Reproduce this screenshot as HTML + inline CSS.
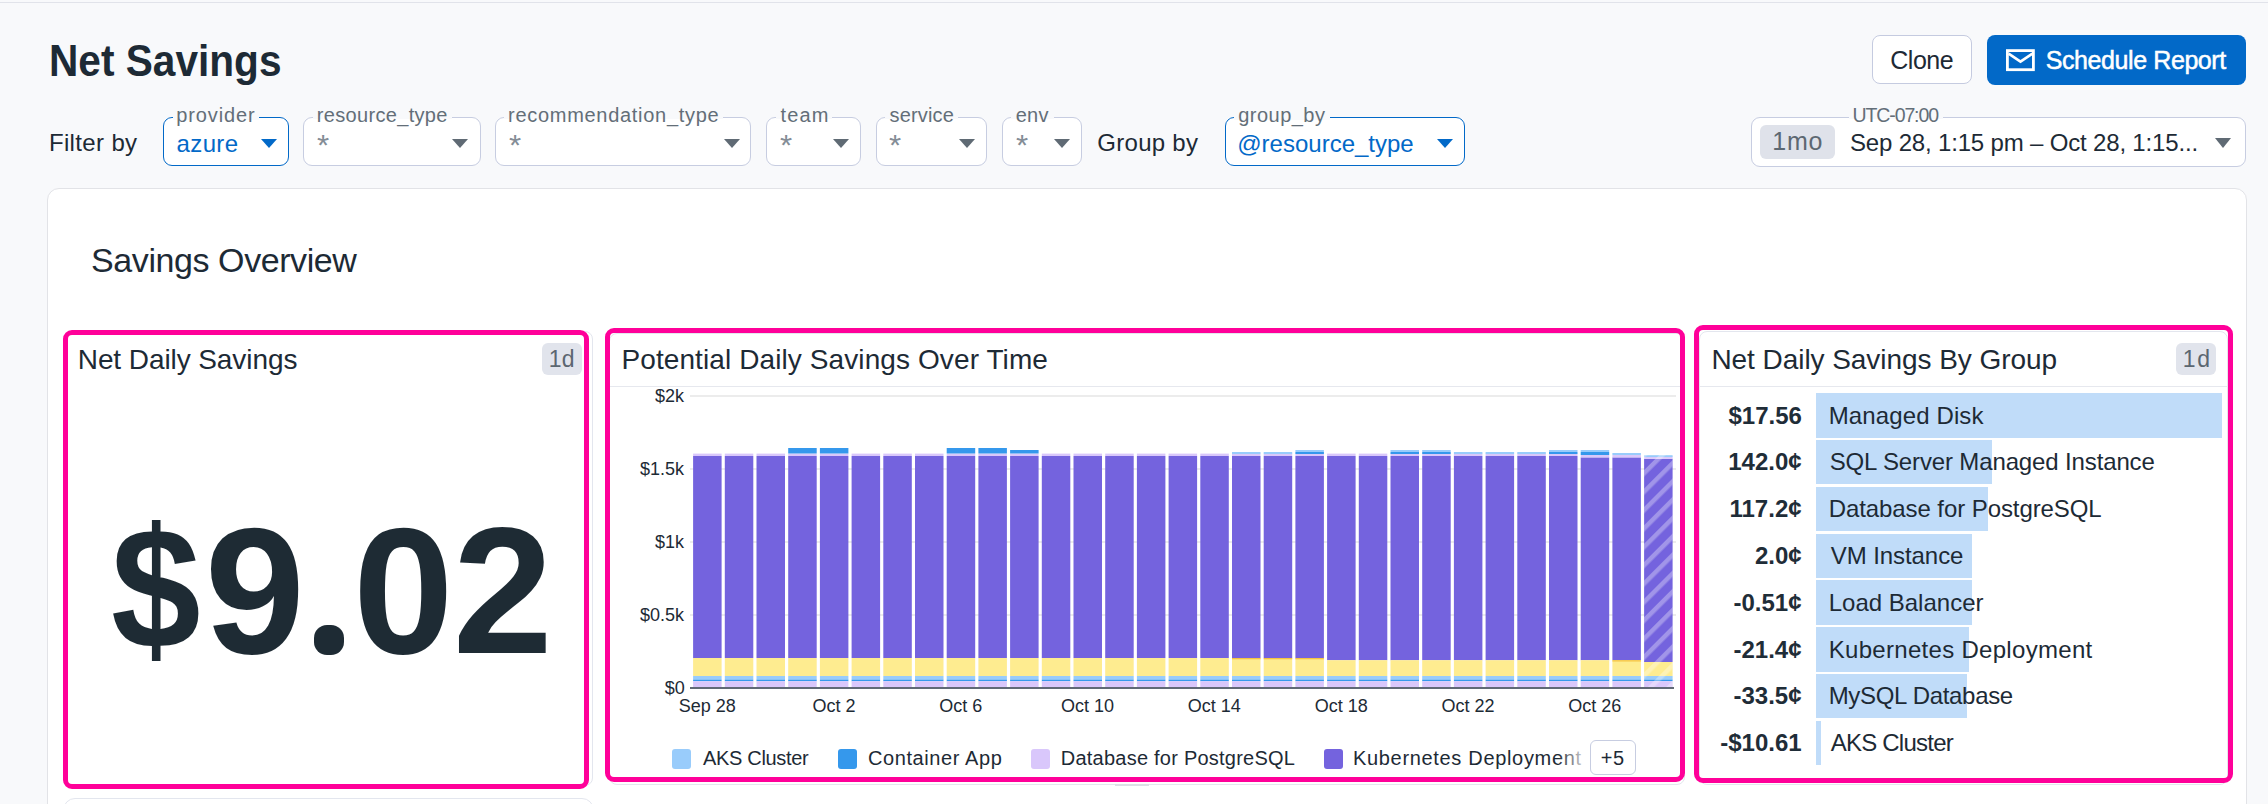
<!DOCTYPE html>
<html><head><meta charset="utf-8"><title>Net Savings</title>
<style>
html,body{margin:0;padding:0;}
body{width:2268px;height:804px;overflow:hidden;position:relative;background:#f8f9fb;font-family:'Liberation Sans', sans-serif;}
.t{position:absolute;white-space:nowrap;line-height:1;font-family:'Liberation Sans', sans-serif;}
.b{position:absolute;}
</style></head><body>
<div class="b" style="left:0px;top:2px;width:2268px;height:1px;background:#e1e3ea;"></div>
<div class="t" style="left:49.03px;top:39.00px;font-size:44px;color:#1d2a35;font-weight:700;transform:scale(0.9230,1.0000);transform-origin:0 37px;">Net Savings</div>
<div class="b" style="left:1872px;top:35px;width:100px;height:49px;background:#fff;border:1px solid #c5cbe0;border-radius:8px;box-sizing:border-box;"></div>
<div class="t" style="left:1890.25px;top:48.00px;font-size:25px;color:#1d2a35;letter-spacing:-0.475px;">Clone</div>
<div class="b" style="left:1987px;top:35px;width:259px;height:50px;background:#0269c8;border-radius:8px;"></div>
<svg class="b" style="left:2004px;top:47px" width="32" height="26" viewBox="0 0 32 26"><rect x="3.4" y="3.6" width="26" height="19.1" fill="none" stroke="#fff" stroke-width="2.8"/><path d="M4.6 6.6 L16.5 14.6 L28.4 6.6" fill="none" stroke="#fff" stroke-width="2.6"/></svg>
<div class="t" style="left:2045.75px;top:48.00px;font-size:25px;color:#ffffff;letter-spacing:-0.411px;-webkit-text-stroke:0.5px #fff;">Schedule Report</div>
<div class="t" style="left:48.90px;top:130.80px;font-size:24px;color:#1d2a35;letter-spacing:0.356px;">Filter by</div>
<div class="b" style="left:163px;top:117px;width:126px;height:49px;background:#fff;border:1.6px solid #0269c8;border-radius:9px;box-sizing:border-box;"></div>
<div class="b" style="left:172.6px;top:112px;width:86.80000000000001px;height:8px;background:#f8f9fb;"></div>
<div class="b" style="left:172.6px;top:119.5px;width:86.80000000000001px;height:8px;background:#fff;"></div>
<div class="t" style="left:176.35px;top:104.80px;font-size:20px;color:#636e78;letter-spacing:0.864px;">provider</div>
<div class="t" style="left:176.60px;top:131.60px;font-size:24px;color:#0269c8;letter-spacing:0.350px;">azure</div>
<svg class="b" style="left:261px;top:139px" width="16" height="9" viewBox="0 0 16 9"><path d="M0 0 L16 0 L8 9 Z" fill="#0269c8"/></svg>
<div class="b" style="left:303px;top:117px;width:178px;height:49px;background:#fff;border:1.5px solid #c7cde1;border-radius:9px;box-sizing:border-box;"></div>
<div class="b" style="left:313px;top:112px;width:138.7px;height:8px;background:#f8f9fb;"></div>
<div class="b" style="left:313px;top:118.5px;width:138.7px;height:8px;background:#fff;"></div>
<div class="t" style="left:316.75px;top:104.80px;font-size:20px;color:#636e78;letter-spacing:0.329px;">resource_type</div>
<div class="t" style="left:317.48px;top:129.65px;font-size:30px;color:#848d96;transform:scale(1.0419,1.0000);transform-origin:0 25px;">*</div>
<svg class="b" style="left:452px;top:139px" width="16" height="9" viewBox="0 0 16 9"><path d="M0 0 L16 0 L8 9 Z" fill="#5f6a74"/></svg>
<div class="b" style="left:495px;top:117px;width:256px;height:49px;background:#fff;border:1.5px solid #c7cde1;border-radius:9px;box-sizing:border-box;"></div>
<div class="b" style="left:504.3px;top:112px;width:218.49999999999994px;height:8px;background:#f8f9fb;"></div>
<div class="b" style="left:504.3px;top:118.5px;width:218.49999999999994px;height:8px;background:#fff;"></div>
<div class="t" style="left:508.05px;top:104.80px;font-size:20px;color:#636e78;letter-spacing:0.708px;">recommendation_type</div>
<div class="t" style="left:508.78px;top:129.65px;font-size:30px;color:#848d96;transform:scale(1.0419,1.0000);transform-origin:0 25px;">*</div>
<svg class="b" style="left:724px;top:139px" width="16" height="9" viewBox="0 0 16 9"><path d="M0 0 L16 0 L8 9 Z" fill="#5f6a74"/></svg>
<div class="b" style="left:766px;top:117px;width:95px;height:49px;background:#fff;border:1.5px solid #c7cde1;border-radius:9px;box-sizing:border-box;"></div>
<div class="b" style="left:775.7px;top:112px;width:56.5px;height:8px;background:#f8f9fb;"></div>
<div class="b" style="left:775.7px;top:118.5px;width:56.5px;height:8px;background:#fff;"></div>
<div class="t" style="left:780.45px;top:104.80px;font-size:20px;color:#636e78;letter-spacing:1.167px;">team</div>
<div class="t" style="left:780.18px;top:129.65px;font-size:30px;color:#848d96;transform:scale(1.0419,1.0000);transform-origin:0 25px;">*</div>
<svg class="b" style="left:832.5px;top:139px" width="16" height="9" viewBox="0 0 16 9"><path d="M0 0 L16 0 L8 9 Z" fill="#5f6a74"/></svg>
<div class="b" style="left:876px;top:117px;width:111px;height:49px;background:#fff;border:1.5px solid #c7cde1;border-radius:9px;box-sizing:border-box;"></div>
<div class="b" style="left:885px;top:112px;width:73px;height:8px;background:#f8f9fb;"></div>
<div class="b" style="left:885px;top:118.5px;width:73px;height:8px;background:#fff;"></div>
<div class="t" style="left:889.50px;top:104.80px;font-size:20px;color:#636e78;letter-spacing:0.167px;">service</div>
<div class="t" style="left:889.48px;top:129.65px;font-size:30px;color:#848d96;transform:scale(1.0419,1.0000);transform-origin:0 25px;">*</div>
<svg class="b" style="left:959px;top:139px" width="16" height="9" viewBox="0 0 16 9"><path d="M0 0 L16 0 L8 9 Z" fill="#5f6a74"/></svg>
<div class="b" style="left:1002px;top:117px;width:80px;height:49px;background:#fff;border:1.5px solid #c7cde1;border-radius:9px;box-sizing:border-box;"></div>
<div class="b" style="left:1011.4px;top:112px;width:42.19999999999993px;height:8px;background:#f8f9fb;"></div>
<div class="b" style="left:1011.4px;top:118.5px;width:42.19999999999993px;height:8px;background:#fff;"></div>
<div class="t" style="left:1015.65px;top:104.80px;font-size:20px;color:#636e78;letter-spacing:0.350px;">env</div>
<div class="t" style="left:1015.88px;top:129.65px;font-size:30px;color:#848d96;transform:scale(1.0419,1.0000);transform-origin:0 25px;">*</div>
<svg class="b" style="left:1053.5px;top:139px" width="16" height="9" viewBox="0 0 16 9"><path d="M0 0 L16 0 L8 9 Z" fill="#5f6a74"/></svg>
<div class="t" style="left:1097.35px;top:130.80px;font-size:24px;color:#1d2a35;letter-spacing:0.271px;">Group by</div>
<div class="b" style="left:1225px;top:117px;width:240px;height:49px;background:#fff;border:1.6px solid #0269c8;border-radius:9px;box-sizing:border-box;"></div>
<div class="b" style="left:1234px;top:112px;width:96px;height:8px;background:#f8f9fb;"></div>
<div class="b" style="left:1234px;top:119.5px;width:96px;height:8px;background:#fff;"></div>
<div class="t" style="left:1238.25px;top:104.80px;font-size:20px;color:#636e78;letter-spacing:0.464px;">group_by</div>
<div class="t" style="left:1237.25px;top:131.60px;font-size:24px;color:#0269c8;">@resource_type</div>
<svg class="b" style="left:1437px;top:139px" width="16" height="9" viewBox="0 0 16 9"><path d="M0 0 L16 0 L8 9 Z" fill="#0269c8"/></svg>
<div class="b" style="left:1751px;top:117px;width:495px;height:50px;background:#fff;border:1.5px solid #c7cde1;border-radius:9px;box-sizing:border-box;"></div>
<div class="b" style="left:1849px;top:112px;width:94px;height:8px;background:#f8f9fb;"></div>
<div class="b" style="left:1849px;top:118.5px;width:94px;height:8px;background:#fff;"></div>
<div class="t" style="left:1852.50px;top:106.20px;font-size:19.5px;color:#636e78;letter-spacing:-1.106px;">UTC-07:00</div>
<div class="b" style="left:1760px;top:125px;width:75px;height:34px;background:#dfe2ea;border-radius:6px;"></div>
<div class="t" style="left:1772.25px;top:129.20px;font-size:25px;color:#5d6872;letter-spacing:0.750px;">1mo</div>
<div class="t" style="left:1850.00px;top:130.70px;font-size:24px;color:#1d2a35;letter-spacing:-0.172px;">Sep 28, 1:15 pm – Oct 28, 1:15...</div>
<svg class="b" style="left:2215px;top:138px" width="16" height="10" viewBox="0 0 16 10"><path d="M0 0 L16 0 L8 10 Z" fill="#5f6a74"/></svg>
<div class="b" style="left:47px;top:188px;width:2200px;height:700px;background:#fff;border:1px solid #e2e3e7;border-radius:12px;box-sizing:border-box;"></div>
<div class="t" style="left:91.10px;top:242.80px;font-size:34px;color:#1d2a35;letter-spacing:-0.423px;">Savings Overview</div>
<div class="b" style="left:64px;top:331px;width:529px;height:455px;border:1px solid #e3e6ee;border-radius:8px;box-sizing:border-box;"></div>
<div class="b" style="left:609px;top:333px;width:1076px;height:452px;border:1px solid #e3e6ee;border-radius:8px;box-sizing:border-box;"></div>
<div class="b" style="left:1699px;top:331px;width:529px;height:454px;border:1px solid #e3e6ee;border-radius:8px;box-sizing:border-box;"></div>
<div class="b" style="left:63px;top:798px;width:531px;height:40px;border:1px solid #e3e6ee;border-radius:12px;box-sizing:border-box;"></div>
<div class="t" style="left:77.75px;top:346.00px;font-size:28px;color:#1d2a35;letter-spacing:-0.084px;">Net Daily Savings</div>
<div class="b" style="left:542px;top:343px;width:40px;height:32px;background:#e1e4ec;border-radius:6px;"></div>
<div class="t" style="left:548.75px;top:348.00px;font-size:23px;color:#5b6670;letter-spacing:0.250px;">1d</div>
<div class="t" style="left:111.49px;top:495.80px;font-size:180px;color:#1e2b34;font-weight:700;transform:scale(0.8955,0.9630);transform-origin:0 152px;">$</div>
<div class="t" style="left:204.65px;top:501.30px;font-size:180px;color:#1e2b34;font-weight:700;">9</div>
<div class="t" style="left:352.76px;top:501.30px;font-size:180px;color:#1e2b34;font-weight:700;transform:scale(1.0052,1.0000);transform-origin:0 152px;">0</div>
<div class="t" style="left:452.76px;top:501.30px;font-size:180px;color:#1e2b34;font-weight:700;">2</div>
<div class="b" style="left:314px;top:624.5px;width:30px;height:30px;background:#1e2b34;border-radius:13px;"></div>
<div class="t" style="left:621.45px;top:345.70px;font-size:28px;color:#1d2a35;letter-spacing:0.100px;">Potential Daily Savings Over Time</div>
<div class="b" style="left:610px;top:386px;width:1074px;height:1px;background:#e6e8ee;"></div>
<div class="b" style="left:690px;top:395px;width:986px;height:2px;background:#ececec;"></div>
<div class="b" style="left:690px;top:468px;width:986px;height:2px;background:#ececec;"></div>
<div class="b" style="left:690px;top:541px;width:986px;height:2px;background:#ececec;"></div>
<div class="b" style="left:690px;top:614px;width:986px;height:2px;background:#ececec;"></div>
<div class="t" style="left:655.00px;top:386.80px;font-size:18px;color:#1d2a35;">$2k</div>
<div class="t" style="left:640.00px;top:459.80px;font-size:18px;color:#1d2a35;">$1.5k</div>
<div class="t" style="left:655.00px;top:532.80px;font-size:18px;color:#1d2a35;">$1k</div>
<div class="t" style="left:640.00px;top:605.80px;font-size:18px;color:#1d2a35;">$0.5k</div>
<div class="t" style="left:664.75px;top:678.80px;font-size:18px;color:#1d2a35;">$0</div>
<svg class="b" style="left:0;top:0" width="2268" height="804" viewBox="0 0 2268 804"><defs><pattern id="hatch" patternUnits="userSpaceOnUse" width="13" height="13" patternTransform="rotate(45)"><rect x="0" y="0" width="4.5" height="13" fill="rgba(255,255,255,0.32)"/></pattern></defs><rect x="693.10" y="456.00" width="28.50" height="202.00" fill="#7463de"/><rect x="693.10" y="453.60" width="28.50" height="2.40" fill="#d9c7fb"/><rect x="693.10" y="658.00" width="28.50" height="18.00" fill="#feec90"/><rect x="693.10" y="676.00" width="28.50" height="3.60" fill="#99ccfb"/><rect x="693.10" y="679.60" width="28.50" height="1.60" fill="#3598ec"/><rect x="693.10" y="681.20" width="28.50" height="5.80" fill="#d9c7fb"/><rect x="724.80" y="456.00" width="28.50" height="202.00" fill="#7463de"/><rect x="724.80" y="453.60" width="28.50" height="2.40" fill="#d9c7fb"/><rect x="724.80" y="658.00" width="28.50" height="18.00" fill="#feec90"/><rect x="724.80" y="676.00" width="28.50" height="3.60" fill="#99ccfb"/><rect x="724.80" y="679.60" width="28.50" height="1.60" fill="#3598ec"/><rect x="724.80" y="681.20" width="28.50" height="5.80" fill="#d9c7fb"/><rect x="756.50" y="456.00" width="28.50" height="202.00" fill="#7463de"/><rect x="756.50" y="453.60" width="28.50" height="2.40" fill="#d9c7fb"/><rect x="756.50" y="658.00" width="28.50" height="18.00" fill="#feec90"/><rect x="756.50" y="676.00" width="28.50" height="3.60" fill="#99ccfb"/><rect x="756.50" y="679.60" width="28.50" height="1.60" fill="#3598ec"/><rect x="756.50" y="681.20" width="28.50" height="5.80" fill="#d9c7fb"/><rect x="788.20" y="456.00" width="28.50" height="202.00" fill="#7463de"/><rect x="788.20" y="453.60" width="28.50" height="2.40" fill="#d9c7fb"/><rect x="788.20" y="448.00" width="28.50" height="5.50" fill="#3598ec"/><rect x="788.20" y="658.00" width="28.50" height="18.00" fill="#feec90"/><rect x="788.20" y="676.00" width="28.50" height="3.60" fill="#99ccfb"/><rect x="788.20" y="679.60" width="28.50" height="1.60" fill="#3598ec"/><rect x="788.20" y="681.20" width="28.50" height="5.80" fill="#d9c7fb"/><rect x="819.90" y="456.00" width="28.50" height="202.00" fill="#7463de"/><rect x="819.90" y="453.60" width="28.50" height="2.40" fill="#d9c7fb"/><rect x="819.90" y="448.00" width="28.50" height="5.50" fill="#3598ec"/><rect x="819.90" y="658.00" width="28.50" height="18.00" fill="#feec90"/><rect x="819.90" y="676.00" width="28.50" height="3.60" fill="#99ccfb"/><rect x="819.90" y="679.60" width="28.50" height="1.60" fill="#3598ec"/><rect x="819.90" y="681.20" width="28.50" height="5.80" fill="#d9c7fb"/><rect x="851.60" y="456.00" width="28.50" height="202.00" fill="#7463de"/><rect x="851.60" y="453.60" width="28.50" height="2.40" fill="#d9c7fb"/><rect x="851.60" y="658.00" width="28.50" height="18.00" fill="#feec90"/><rect x="851.60" y="676.00" width="28.50" height="3.60" fill="#99ccfb"/><rect x="851.60" y="679.60" width="28.50" height="1.60" fill="#3598ec"/><rect x="851.60" y="681.20" width="28.50" height="5.80" fill="#d9c7fb"/><rect x="883.30" y="456.00" width="28.50" height="202.00" fill="#7463de"/><rect x="883.30" y="453.60" width="28.50" height="2.40" fill="#d9c7fb"/><rect x="883.30" y="658.00" width="28.50" height="18.00" fill="#feec90"/><rect x="883.30" y="676.00" width="28.50" height="3.60" fill="#99ccfb"/><rect x="883.30" y="679.60" width="28.50" height="1.60" fill="#3598ec"/><rect x="883.30" y="681.20" width="28.50" height="5.80" fill="#d9c7fb"/><rect x="915.00" y="456.00" width="28.50" height="202.00" fill="#7463de"/><rect x="915.00" y="453.60" width="28.50" height="2.40" fill="#d9c7fb"/><rect x="915.00" y="658.00" width="28.50" height="18.00" fill="#feec90"/><rect x="915.00" y="676.00" width="28.50" height="3.60" fill="#99ccfb"/><rect x="915.00" y="679.60" width="28.50" height="1.60" fill="#3598ec"/><rect x="915.00" y="681.20" width="28.50" height="5.80" fill="#d9c7fb"/><rect x="946.70" y="456.00" width="28.50" height="202.00" fill="#7463de"/><rect x="946.70" y="453.60" width="28.50" height="2.40" fill="#d9c7fb"/><rect x="946.70" y="448.00" width="28.50" height="5.50" fill="#3598ec"/><rect x="946.70" y="658.00" width="28.50" height="18.00" fill="#feec90"/><rect x="946.70" y="676.00" width="28.50" height="3.60" fill="#99ccfb"/><rect x="946.70" y="679.60" width="28.50" height="1.60" fill="#3598ec"/><rect x="946.70" y="681.20" width="28.50" height="5.80" fill="#d9c7fb"/><rect x="978.40" y="456.00" width="28.50" height="202.00" fill="#7463de"/><rect x="978.40" y="453.60" width="28.50" height="2.40" fill="#d9c7fb"/><rect x="978.40" y="448.00" width="28.50" height="5.50" fill="#3598ec"/><rect x="978.40" y="658.00" width="28.50" height="18.00" fill="#feec90"/><rect x="978.40" y="676.00" width="28.50" height="3.60" fill="#99ccfb"/><rect x="978.40" y="679.60" width="28.50" height="1.60" fill="#3598ec"/><rect x="978.40" y="681.20" width="28.50" height="5.80" fill="#d9c7fb"/><rect x="1010.10" y="456.00" width="28.50" height="202.00" fill="#7463de"/><rect x="1010.10" y="453.60" width="28.50" height="2.40" fill="#d9c7fb"/><rect x="1010.10" y="450.00" width="28.50" height="3.50" fill="#3598ec"/><rect x="1010.10" y="658.00" width="28.50" height="18.00" fill="#feec90"/><rect x="1010.10" y="676.00" width="28.50" height="3.60" fill="#99ccfb"/><rect x="1010.10" y="679.60" width="28.50" height="1.60" fill="#3598ec"/><rect x="1010.10" y="681.20" width="28.50" height="5.80" fill="#d9c7fb"/><rect x="1041.80" y="456.00" width="28.50" height="202.00" fill="#7463de"/><rect x="1041.80" y="453.60" width="28.50" height="2.40" fill="#d9c7fb"/><rect x="1041.80" y="658.00" width="28.50" height="18.00" fill="#feec90"/><rect x="1041.80" y="676.00" width="28.50" height="3.60" fill="#99ccfb"/><rect x="1041.80" y="679.60" width="28.50" height="1.60" fill="#3598ec"/><rect x="1041.80" y="681.20" width="28.50" height="5.80" fill="#d9c7fb"/><rect x="1073.50" y="456.00" width="28.50" height="202.00" fill="#7463de"/><rect x="1073.50" y="453.60" width="28.50" height="2.40" fill="#d9c7fb"/><rect x="1073.50" y="658.00" width="28.50" height="18.00" fill="#feec90"/><rect x="1073.50" y="676.00" width="28.50" height="3.60" fill="#99ccfb"/><rect x="1073.50" y="679.60" width="28.50" height="1.60" fill="#3598ec"/><rect x="1073.50" y="681.20" width="28.50" height="5.80" fill="#d9c7fb"/><rect x="1105.20" y="456.00" width="28.50" height="202.00" fill="#7463de"/><rect x="1105.20" y="453.60" width="28.50" height="2.40" fill="#d9c7fb"/><rect x="1105.20" y="658.00" width="28.50" height="18.00" fill="#feec90"/><rect x="1105.20" y="676.00" width="28.50" height="3.60" fill="#99ccfb"/><rect x="1105.20" y="679.60" width="28.50" height="1.60" fill="#3598ec"/><rect x="1105.20" y="681.20" width="28.50" height="5.80" fill="#d9c7fb"/><rect x="1136.90" y="456.00" width="28.50" height="202.00" fill="#7463de"/><rect x="1136.90" y="453.60" width="28.50" height="2.40" fill="#d9c7fb"/><rect x="1136.90" y="658.00" width="28.50" height="18.00" fill="#feec90"/><rect x="1136.90" y="676.00" width="28.50" height="3.60" fill="#99ccfb"/><rect x="1136.90" y="679.60" width="28.50" height="1.60" fill="#3598ec"/><rect x="1136.90" y="681.20" width="28.50" height="5.80" fill="#d9c7fb"/><rect x="1168.60" y="456.00" width="28.50" height="202.00" fill="#7463de"/><rect x="1168.60" y="453.60" width="28.50" height="2.40" fill="#d9c7fb"/><rect x="1168.60" y="658.00" width="28.50" height="18.00" fill="#feec90"/><rect x="1168.60" y="676.00" width="28.50" height="3.60" fill="#99ccfb"/><rect x="1168.60" y="679.60" width="28.50" height="1.60" fill="#3598ec"/><rect x="1168.60" y="681.20" width="28.50" height="5.80" fill="#d9c7fb"/><rect x="1200.30" y="456.00" width="28.50" height="202.00" fill="#7463de"/><rect x="1200.30" y="453.60" width="28.50" height="2.40" fill="#d9c7fb"/><rect x="1200.30" y="658.00" width="28.50" height="18.00" fill="#feec90"/><rect x="1200.30" y="676.00" width="28.50" height="3.60" fill="#99ccfb"/><rect x="1200.30" y="679.60" width="28.50" height="1.60" fill="#3598ec"/><rect x="1200.30" y="681.20" width="28.50" height="5.80" fill="#d9c7fb"/><rect x="1232.00" y="456.00" width="28.50" height="202.00" fill="#7463de"/><rect x="1232.00" y="453.60" width="28.50" height="2.40" fill="#d9c7fb"/><rect x="1232.00" y="452.00" width="28.50" height="2.00" fill="#99ccfb"/><rect x="1232.00" y="658.00" width="28.50" height="18.00" fill="#feec90"/><rect x="1232.00" y="658.00" width="28.50" height="1.30" fill="#f5c443"/><rect x="1232.00" y="676.00" width="28.50" height="3.60" fill="#99ccfb"/><rect x="1232.00" y="679.60" width="28.50" height="1.60" fill="#3598ec"/><rect x="1232.00" y="681.20" width="28.50" height="5.80" fill="#d9c7fb"/><rect x="1263.70" y="456.00" width="28.50" height="202.00" fill="#7463de"/><rect x="1263.70" y="453.60" width="28.50" height="2.40" fill="#d9c7fb"/><rect x="1263.70" y="452.00" width="28.50" height="2.00" fill="#99ccfb"/><rect x="1263.70" y="658.00" width="28.50" height="18.00" fill="#feec90"/><rect x="1263.70" y="658.00" width="28.50" height="1.30" fill="#f5c443"/><rect x="1263.70" y="676.00" width="28.50" height="3.60" fill="#99ccfb"/><rect x="1263.70" y="679.60" width="28.50" height="1.60" fill="#3598ec"/><rect x="1263.70" y="681.20" width="28.50" height="5.80" fill="#d9c7fb"/><rect x="1295.40" y="456.00" width="28.50" height="202.00" fill="#7463de"/><rect x="1295.40" y="453.60" width="28.50" height="2.40" fill="#d9c7fb"/><rect x="1295.40" y="450.00" width="28.50" height="2.00" fill="#99ccfb"/><rect x="1295.40" y="452.00" width="28.50" height="2.00" fill="#3598ec"/><rect x="1295.40" y="658.00" width="28.50" height="18.00" fill="#feec90"/><rect x="1295.40" y="658.00" width="28.50" height="1.30" fill="#f5c443"/><rect x="1295.40" y="676.00" width="28.50" height="3.60" fill="#99ccfb"/><rect x="1295.40" y="679.60" width="28.50" height="1.60" fill="#3598ec"/><rect x="1295.40" y="681.20" width="28.50" height="5.80" fill="#d9c7fb"/><rect x="1327.10" y="456.00" width="28.50" height="204.20" fill="#7463de"/><rect x="1327.10" y="453.60" width="28.50" height="2.40" fill="#d9c7fb"/><rect x="1327.10" y="660.20" width="28.50" height="15.80" fill="#feec90"/><rect x="1327.10" y="676.00" width="28.50" height="3.60" fill="#99ccfb"/><rect x="1327.10" y="679.60" width="28.50" height="1.60" fill="#3598ec"/><rect x="1327.10" y="681.20" width="28.50" height="5.80" fill="#d9c7fb"/><rect x="1358.80" y="456.00" width="28.50" height="204.20" fill="#7463de"/><rect x="1358.80" y="453.60" width="28.50" height="2.40" fill="#d9c7fb"/><rect x="1358.80" y="660.20" width="28.50" height="15.80" fill="#feec90"/><rect x="1358.80" y="676.00" width="28.50" height="3.60" fill="#99ccfb"/><rect x="1358.80" y="679.60" width="28.50" height="1.60" fill="#3598ec"/><rect x="1358.80" y="681.20" width="28.50" height="5.80" fill="#d9c7fb"/><rect x="1390.50" y="456.00" width="28.50" height="204.20" fill="#7463de"/><rect x="1390.50" y="453.60" width="28.50" height="2.40" fill="#d9c7fb"/><rect x="1390.50" y="450.00" width="28.50" height="2.00" fill="#99ccfb"/><rect x="1390.50" y="452.00" width="28.50" height="2.00" fill="#3598ec"/><rect x="1390.50" y="660.20" width="28.50" height="15.80" fill="#feec90"/><rect x="1390.50" y="676.00" width="28.50" height="3.60" fill="#99ccfb"/><rect x="1390.50" y="679.60" width="28.50" height="1.60" fill="#3598ec"/><rect x="1390.50" y="681.20" width="28.50" height="5.80" fill="#d9c7fb"/><rect x="1422.20" y="456.00" width="28.50" height="204.20" fill="#7463de"/><rect x="1422.20" y="453.60" width="28.50" height="2.40" fill="#d9c7fb"/><rect x="1422.20" y="450.00" width="28.50" height="2.00" fill="#99ccfb"/><rect x="1422.20" y="452.00" width="28.50" height="2.00" fill="#3598ec"/><rect x="1422.20" y="660.20" width="28.50" height="15.80" fill="#feec90"/><rect x="1422.20" y="676.00" width="28.50" height="3.60" fill="#99ccfb"/><rect x="1422.20" y="679.60" width="28.50" height="1.60" fill="#3598ec"/><rect x="1422.20" y="681.20" width="28.50" height="5.80" fill="#d9c7fb"/><rect x="1453.90" y="456.00" width="28.50" height="204.20" fill="#7463de"/><rect x="1453.90" y="453.60" width="28.50" height="2.40" fill="#d9c7fb"/><rect x="1453.90" y="452.00" width="28.50" height="2.00" fill="#99ccfb"/><rect x="1453.90" y="660.20" width="28.50" height="15.80" fill="#feec90"/><rect x="1453.90" y="676.00" width="28.50" height="3.60" fill="#99ccfb"/><rect x="1453.90" y="679.60" width="28.50" height="1.60" fill="#3598ec"/><rect x="1453.90" y="681.20" width="28.50" height="5.80" fill="#d9c7fb"/><rect x="1485.60" y="456.00" width="28.50" height="204.20" fill="#7463de"/><rect x="1485.60" y="453.60" width="28.50" height="2.40" fill="#d9c7fb"/><rect x="1485.60" y="452.00" width="28.50" height="2.00" fill="#99ccfb"/><rect x="1485.60" y="660.20" width="28.50" height="15.80" fill="#feec90"/><rect x="1485.60" y="676.00" width="28.50" height="3.60" fill="#99ccfb"/><rect x="1485.60" y="679.60" width="28.50" height="1.60" fill="#3598ec"/><rect x="1485.60" y="681.20" width="28.50" height="5.80" fill="#d9c7fb"/><rect x="1517.30" y="456.00" width="28.50" height="204.20" fill="#7463de"/><rect x="1517.30" y="453.60" width="28.50" height="2.40" fill="#d9c7fb"/><rect x="1517.30" y="452.00" width="28.50" height="2.00" fill="#99ccfb"/><rect x="1517.30" y="660.20" width="28.50" height="15.80" fill="#feec90"/><rect x="1517.30" y="676.00" width="28.50" height="3.60" fill="#99ccfb"/><rect x="1517.30" y="679.60" width="28.50" height="1.60" fill="#3598ec"/><rect x="1517.30" y="681.20" width="28.50" height="5.80" fill="#d9c7fb"/><rect x="1549.00" y="456.00" width="28.50" height="204.20" fill="#7463de"/><rect x="1549.00" y="453.60" width="28.50" height="2.40" fill="#d9c7fb"/><rect x="1549.00" y="450.00" width="28.50" height="2.00" fill="#99ccfb"/><rect x="1549.00" y="452.00" width="28.50" height="2.00" fill="#3598ec"/><rect x="1549.00" y="660.20" width="28.50" height="15.80" fill="#feec90"/><rect x="1549.00" y="676.00" width="28.50" height="3.60" fill="#99ccfb"/><rect x="1549.00" y="679.60" width="28.50" height="1.60" fill="#3598ec"/><rect x="1549.00" y="681.20" width="28.50" height="5.80" fill="#d9c7fb"/><rect x="1580.70" y="457.40" width="28.50" height="202.80" fill="#7463de"/><rect x="1580.70" y="455.00" width="28.50" height="2.40" fill="#d9c7fb"/><rect x="1580.70" y="450.00" width="28.50" height="2.00" fill="#99ccfb"/><rect x="1580.70" y="452.00" width="28.50" height="3.00" fill="#3598ec"/><rect x="1580.70" y="660.20" width="28.50" height="15.80" fill="#feec90"/><rect x="1580.70" y="676.00" width="28.50" height="3.60" fill="#99ccfb"/><rect x="1580.70" y="679.60" width="28.50" height="1.60" fill="#3598ec"/><rect x="1580.70" y="681.20" width="28.50" height="5.80" fill="#d9c7fb"/><rect x="1612.40" y="457.40" width="28.50" height="202.80" fill="#7463de"/><rect x="1612.40" y="455.00" width="28.50" height="2.40" fill="#d9c7fb"/><rect x="1612.40" y="453.00" width="28.50" height="2.00" fill="#99ccfb"/><rect x="1612.40" y="660.20" width="28.50" height="15.80" fill="#feec90"/><rect x="1612.40" y="660.20" width="28.50" height="1.30" fill="#f5c443"/><rect x="1612.40" y="676.00" width="28.50" height="3.60" fill="#99ccfb"/><rect x="1612.40" y="679.60" width="28.50" height="1.60" fill="#3598ec"/><rect x="1612.40" y="681.20" width="28.50" height="5.80" fill="#d9c7fb"/><rect x="1644.10" y="458.80" width="28.50" height="203.20" fill="#7463de"/><rect x="1644.10" y="456.40" width="28.50" height="2.40" fill="#d9c7fb"/><rect x="1644.10" y="455.20" width="28.50" height="1.80" fill="#99ccfb"/><rect x="1644.10" y="662.00" width="28.50" height="14.00" fill="#feec90"/><rect x="1644.10" y="676.00" width="28.50" height="3.60" fill="#99ccfb"/><rect x="1644.10" y="679.60" width="28.50" height="1.60" fill="#3598ec"/><rect x="1644.10" y="681.20" width="28.50" height="5.80" fill="#d9c7fb"/><rect x="1644.10" y="454.80" width="28.50" height="232.20" fill="url(#hatch)"/><rect x="690.00" y="687.00" width="984.00" height="2.00" fill="#606977"/></svg>
<div class="t" style="left:678.70px;top:697.20px;font-size:18px;color:#1d2a35;">Sep 28</div>
<div class="t" style="left:812.50px;top:697.20px;font-size:18px;color:#1d2a35;">Oct 2</div>
<div class="t" style="left:939.30px;top:697.20px;font-size:18px;color:#1d2a35;">Oct 6</div>
<div class="t" style="left:1061.10px;top:697.20px;font-size:18px;color:#1d2a35;">Oct 10</div>
<div class="t" style="left:1187.78px;top:697.20px;font-size:18px;color:#1d2a35;">Oct 14</div>
<div class="t" style="left:1314.70px;top:697.20px;font-size:18px;color:#1d2a35;">Oct 18</div>
<div class="t" style="left:1441.50px;top:697.20px;font-size:18px;color:#1d2a35;">Oct 22</div>
<div class="t" style="left:1568.30px;top:697.20px;font-size:18px;color:#1d2a35;">Oct 26</div>
<div class="b" style="left:672px;top:749px;width:19px;height:20px;background:#99ccfb;border-radius:3px;"></div>
<div class="t" style="left:702.90px;top:748.00px;font-size:20px;color:#1d2a35;letter-spacing:-0.305px;">AKS Cluster</div>
<div class="b" style="left:838px;top:749px;width:19px;height:20px;background:#3598ec;border-radius:3px;"></div>
<div class="t" style="left:868.00px;top:748.00px;font-size:20px;color:#1d2a35;letter-spacing:0.583px;">Container App</div>
<div class="b" style="left:1031.4px;top:749px;width:19px;height:20px;background:#d9c7fb;border-radius:3px;"></div>
<div class="t" style="left:1060.80px;top:748.00px;font-size:20px;color:#1d2a35;letter-spacing:0.232px;">Database for PostgreSQL</div>
<div class="b" style="left:1324.3px;top:749px;width:19px;height:20px;background:#7463de;border-radius:3px;"></div>
<div class="t" style="left:1353.00px;top:748.00px;font-size:20px;color:#1d2a35;letter-spacing:0.675px;">Kubernetes Deployment</div>
<div class="b" style="left:1558px;top:740px;width:24px;height:35px;background:linear-gradient(to right, rgba(255,255,255,0), rgba(255,255,255,0.75));"></div>
<div class="b" style="left:1589.5px;top:739.7px;width:46.5px;height:35px;background:#fff;border:1px solid #c7cde1;border-radius:6px;box-sizing:border-box;"></div>
<div class="t" style="left:1600.80px;top:747.50px;font-size:20px;color:#1d2a35;letter-spacing:0.500px;">+5</div>
<div class="b" style="left:1115px;top:784px;width:34px;height:1.5px;background:#dcdfe6;"></div>
<div class="t" style="left:1711.45px;top:345.80px;font-size:28px;color:#1d2a35;letter-spacing:-0.058px;">Net Daily Savings By Group</div>
<div class="b" style="left:2176px;top:343px;width:40px;height:32px;background:#e1e4ec;border-radius:6px;"></div>
<div class="t" style="left:2182.75px;top:348.00px;font-size:23px;color:#5b6670;letter-spacing:1.650px;">1d</div>
<div class="b" style="left:1700px;top:386px;width:527px;height:1px;background:#e6e8ee;"></div>
<div class="b" style="left:1816px;top:393.1px;width:405.8px;height:44.5px;background:#c0dcf9;"></div>
<div class="t" style="left:1728.50px;top:403.60px;font-size:24px;color:#1f2d38;font-weight:700;">$17.56</div>
<div class="t" style="left:1828.70px;top:403.60px;font-size:24px;color:#1d2a35;letter-spacing:0.127px;">Managed Disk</div>
<div class="b" style="left:1816px;top:439.9px;width:176px;height:44.5px;background:#c0dcf9;"></div>
<div class="t" style="left:1728.25px;top:450.40px;font-size:24px;color:#1f2d38;font-weight:700;">142.0¢</div>
<div class="t" style="left:1829.70px;top:450.40px;font-size:24px;color:#1d2a35;letter-spacing:-0.135px;">SQL Server Managed Instance</div>
<div class="b" style="left:1816px;top:486.7px;width:172.4px;height:44.5px;background:#c0dcf9;"></div>
<div class="t" style="left:1729.50px;top:497.20px;font-size:24px;color:#1f2d38;font-weight:700;">117.2¢</div>
<div class="t" style="left:1828.70px;top:497.20px;font-size:24px;color:#1d2a35;letter-spacing:-0.082px;">Database for PostgreSQL</div>
<div class="b" style="left:1816px;top:533.5px;width:156px;height:44.5px;background:#c0dcf9;"></div>
<div class="t" style="left:1755.00px;top:544.00px;font-size:24px;color:#1f2d38;font-weight:700;">2.0¢</div>
<div class="t" style="left:1830.70px;top:544.00px;font-size:24px;color:#1d2a35;letter-spacing:-0.065px;">VM Instance</div>
<div class="b" style="left:1816px;top:580.3px;width:156.2px;height:44.5px;background:#c0dcf9;"></div>
<div class="t" style="left:1733.50px;top:590.80px;font-size:24px;color:#1f2d38;font-weight:700;">-0.51¢</div>
<div class="t" style="left:1828.70px;top:590.80px;font-size:24px;color:#1d2a35;">Load Balancer</div>
<div class="b" style="left:1816px;top:627.1px;width:153px;height:44.5px;background:#c0dcf9;"></div>
<div class="t" style="left:1733.50px;top:637.60px;font-size:24px;color:#1f2d38;font-weight:700;">-21.4¢</div>
<div class="t" style="left:1828.70px;top:637.60px;font-size:24px;color:#1d2a35;letter-spacing:0.302px;">Kubernetes Deployment</div>
<div class="b" style="left:1816px;top:673.9px;width:151.3px;height:44.5px;background:#c0dcf9;"></div>
<div class="t" style="left:1733.50px;top:684.40px;font-size:24px;color:#1f2d38;font-weight:700;">-33.5¢</div>
<div class="t" style="left:1828.70px;top:684.40px;font-size:24px;color:#1d2a35;letter-spacing:-0.308px;">MySQL Database</div>
<div class="b" style="left:1816px;top:720.7px;width:5.2px;height:44.5px;background:#c0dcf9;"></div>
<div class="t" style="left:1720.25px;top:731.20px;font-size:24px;color:#1f2d38;font-weight:700;">-$10.61</div>
<div class="t" style="left:1830.70px;top:731.20px;font-size:24px;color:#1d2a35;letter-spacing:-0.770px;">AKS Cluster</div>
<div class="b" style="left:63px;top:330px;width:526px;height:459px;border:5px solid #ff0099;border-radius:9px;box-sizing:border-box;"></div>
<div class="b" style="left:604.7px;top:328px;width:1080.1px;height:453.7px;border:5px solid #ff0099;border-radius:9px;box-sizing:border-box;"></div>
<div class="b" style="left:1693.5px;top:324.5px;width:539.5px;height:458.5px;border:5px solid #ff0099;border-radius:9px;box-sizing:border-box;"></div>
</body></html>
